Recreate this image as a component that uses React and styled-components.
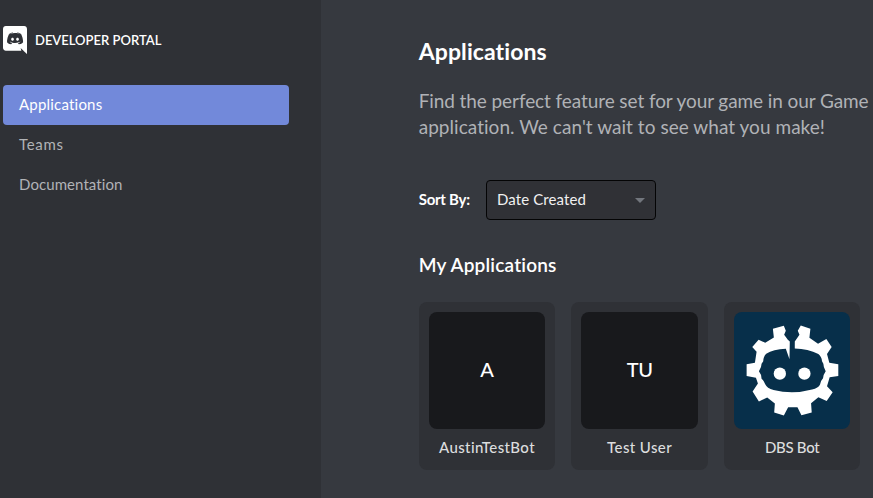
import React from "react";
import styled, { createGlobalStyle } from "styled-components";

const GlobalStyle = createGlobalStyle`
  * { box-sizing: border-box; }
  body {
    margin: 0;
    background: #36393f;
    font-family: Lato, "Open Sans", sans-serif;
    font-variant-ligatures: none;
    overflow: hidden;
  }
  h1, h2, p { margin: 0; }
`;

const Page = styled.div`
  display: grid;
  grid-template-columns: 321px 1fr;
  width: 100vw;
  height: 100vh;
  overflow: hidden;
`;

const Sidebar = styled.aside`
  background: #2f3136;
  padding: 26px 32px 0 3px;
`;

const Brand = styled.div`
  display: flex;
  align-items: center;
  gap: 8px;
  height: 28px;
  margin-bottom: 31px;
  color: #fff;
  font-size: 13px;
  font-weight: 600;

  svg { display: block; }
`;

const Nav = styled.nav`
  display: flex;
  flex-direction: column;
`;

const NavItem = styled.a`
  height: 40px;
  padding-left: 16px;
  border-radius: 4px;
  background: ${(p) => (p.$active ? "#7289da" : "transparent")};
  color: ${(p) => (p.$active ? "#fff" : "#b1b3b6")};
  font-size: 15px;
  line-height: 39px;
  letter-spacing: ${(p) => p.$tracking};
`;

const Main = styled.main`
  padding: 35px 0 0 97.7px;
  background: #36393f;
  color: #fff;
  overflow: hidden;
`;

const Title = styled.h1`
  font-size: 23px;
  font-weight: 700;
  line-height: 32px;
  letter-spacing: 0.1px;
`;

const Intro = styled.p`
  margin-top: 21px;
  color: #b0b2b6;
  font-size: 19px;
  line-height: 26px;
  white-space: nowrap;
`;

const IntroLine = styled.span`
  display: block;
  letter-spacing: ${(p) => p.$tracking};
`;

const SortBar = styled.div`
  display: flex;
  align-items: center;
  margin-top: 40px;
`;

const SortLabel = styled.span`
  width: 67.3px;
  padding-bottom: 2px;
  font-size: 15px;
  font-weight: 700;
  letter-spacing: -0.25px;
`;

const Select = styled.button`
  display: flex;
  align-items: center;
  justify-content: space-between;
  width: 170px;
  height: 40px;
  padding: 0 10px;
  border: 1px solid #040405;
  border-radius: 4px;
  background: #303136;
  color: #f0f0f1;
  font: 400 15px Lato, sans-serif;
  letter-spacing: 0.1px;
`;

const SelectValue = styled.span`
  padding-bottom: 2px;
`;

const Caret = styled.span`
  border: 5px solid transparent;
  border-top-color: #72767d;
  border-bottom: 0;
`;

const Heading = styled.h2`
  margin-top: 32px;
  font-size: 19px;
  font-weight: 600;
  line-height: 26px;
  letter-spacing: 0.2px;
`;

const Cards = styled.div`
  display: grid;
  grid-template-columns: repeat(3, 136.6px);
  gap: 16px;
  margin-top: 24px;
`;

const Card = styled.article`
  height: 168px;
  padding: 10px;
  border-radius: 8px;
  background: #2f3136;
  text-align: center;
`;

const Avatar = styled.div`
  display: flex;
  align-items: center;
  justify-content: center;
  height: 117px;
  border-radius: 8px;
  background: ${(p) => p.$color || "#18191c"};
  font-size: 20px;
  font-weight: 500;
  letter-spacing: -0.4px;
`;

const Initials = styled.span`
  padding-bottom: 3px;
`;

const AppName = styled.div`
  margin-top: 8px;
  color: #dcddde;
  font-size: 15px;
  font-weight: 500;
  line-height: 20px;
  letter-spacing: ${(p) => p.$tracking};
`;

function DiscordMark() {
  return (
    <svg width="24" height="28" viewBox="0 0 448 512" preserveAspectRatio="none" fill="#fff">
      <path d="M297.216 243.2c0 15.616-11.52 28.416-26.112 28.416-14.336 0-26.112-12.8-26.112-28.416s11.52-28.416 26.112-28.416c14.592 0 26.112 12.8 26.112 28.416zm-119.552-28.416c-14.592 0-26.112 12.8-26.112 28.416s11.776 28.416 26.112 28.416c14.592 0 26.112-12.8 26.112-28.416.256-15.616-11.52-28.416-26.112-28.416zM448 52.736V512c-64.494-56.994-43.868-38.128-118.784-107.776l13.568 47.36H52.48C23.552 451.584 0 428.032 0 398.848V52.736C0 23.552 23.552 0 52.48 0h343.04C424.448 0 448 23.552 448 52.736zm-72.96 242.688c0-82.432-36.864-149.248-36.864-149.248-36.864-27.648-71.936-26.88-71.936-26.88l-3.584 4.096c43.52 13.312 63.744 32.512 63.744 32.512-60.811-33.329-132.244-33.335-191.232-7.424-9.472 4.352-15.104 7.424-15.104 7.424s21.248-20.224 67.328-33.536l-2.56-3.072s-35.072-.768-71.936 26.88c0 0-36.864 66.816-36.864 149.248 0 0 21.504 37.12 78.08 38.912 0 0 9.472-11.52 17.152-21.248-32.512-9.728-44.8-30.208-44.8-30.208 3.766 2.636 9.976 6.053 10.496 6.4 43.21 24.198 104.588 32.126 159.744 8.96 8.96-3.328 18.944-8.192 29.44-15.104 0 0-12.8 20.992-46.336 30.464 7.68 9.728 16.896 20.736 16.896 20.736 56.576-1.792 78.336-38.912 78.336-38.912z" />
    </svg>
  );
}

function GearBot() {
  return (
    <svg width="117" height="117" viewBox="-18 -18 351 351" fill="#fff">
      <path d="M150 70L144 65L133 50L138 38L132 23L99 32L102 58L76 74L56 65L37 87L50 101L45 134L20 139V174L48 179L54 197L38 221L57 251L82 239L105 257L103 284L132 293L145 268H173L185 292L216 284L214 256L236 238L261 249L279 223L262 205L270 178L296 174V139L269 134L262 108L276 87L260 63L235 77L209 59L212 32L183 22L174 38L179 50L165 70V91Q205 92 236 108Q246 116 247 130L251 137Q251 147 258 160Q251 170 250 181Q243 188 241 200Q236 211 217 215Q158 231 101 216Q81 211 76 199Q72 188 65 182Q65 170 57 160Q65 148 65 137L70 130Q70 116 79 107Q100 94 138 92L149 124Z" />
      <circle cx="120" cy="167" r="18.5" />
      <circle cx="194" cy="167" r="18.5" />
    </svg>
  );
}

const navItems = [
  { label: "Applications", tracking: "0.2px" },
  { label: "Teams", tracking: "0.7px" },
  { label: "Documentation", tracking: "0.08px" },
];

const apps = [
  { name: "AustinTestBot", initials: "A", tracking: "0.38px" },
  { name: "Test User", initials: "TU", tracking: "0.4px" },
  { name: "DBS Bot", color: "#072f4a", art: <GearBot />, tracking: "-0.3px" },
];

export default function App() {
  return (
    <Page>
      <GlobalStyle />
      <Sidebar>
        <Brand>
          <DiscordMark />
          DEVELOPER PORTAL
        </Brand>
        <Nav>
          {navItems.map((item, i) => (
            <NavItem key={item.label} $active={i === 0} $tracking={item.tracking}>
              {item.label}
            </NavItem>
          ))}
        </Nav>
      </Sidebar>
      <Main>
        <Title>Applications</Title>
        <Intro>
          <IntroLine $tracking="-0.09px">
            Find the perfect feature set for your game in our Game
          </IntroLine>
          <IntroLine $tracking="0.04px">
            application. We can't wait to see what you make!
          </IntroLine>
        </Intro>
        <SortBar>
          <SortLabel>Sort By:</SortLabel>
          <Select>
            <SelectValue>Date Created</SelectValue>
            <Caret />
          </Select>
        </SortBar>
        <Heading>My Applications</Heading>
        <Cards>
          {apps.map((app) => (
            <Card key={app.name}>
              <Avatar $color={app.color}>
                {app.art || <Initials>{app.initials}</Initials>}
              </Avatar>
              <AppName $tracking={app.tracking}>{app.name}</AppName>
            </Card>
          ))}
        </Cards>
      </Main>
    </Page>
  );
}
